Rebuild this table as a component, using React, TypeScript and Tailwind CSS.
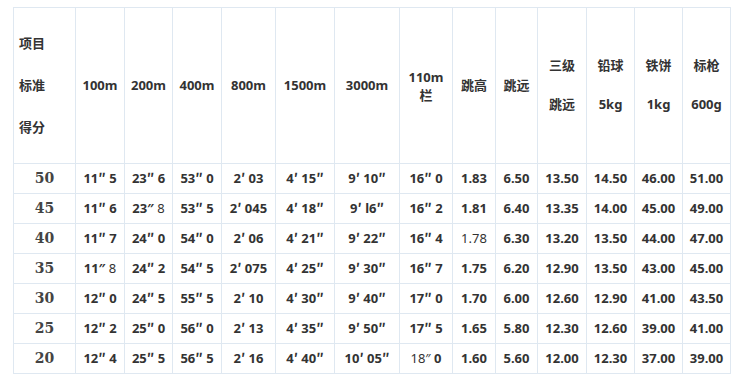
import React from "react";

const widths = [62, 49, 48, 49, 54, 59, 65, 53, 43, 42, 49, 48, 48, 48];

type Cell = string | React.ReactNode;

const rows: Cell[][] = [
  ["50", "11″ 5", "23″ 6", "53″ 0", "2′ 03", "4′ 15″", "9′ 10″", "16″ 0", "1.83", "6.50", "13.50", "14.50", "46.00", "51.00"],
  ["45", "11″ 6", <>23″ <span className="font-normal">8</span></>, "53″ 5", "2′ 045", "4′ 18″", "9′ l6″", "16″ 2", "1.81", "6.40", "13.35", "14.00", "45.00", "49.00"],
  ["40", "11″ 7", "24″ 0", "54″ 0", "2′ 06", "4′ 21″", "9′ 22″", "16″ 4", <span className="font-normal">1.78</span>, "6.30", "13.20", "13.50", "44.00", "47.00"],
  ["35", <>11″ <span className="font-normal">8</span></>, "24″ 2", "54″ 5", "2′ 075", "4′ 25″", "9′ 30″", "16″ 7", "1.75", "6.20", "12.90", "13.50", "43.00", "45.00"],
  ["30", "12″ 0", "24″ 5", "55″ 5", "2′ 10", "4′ 30″", "9′ 40″", "17″ 0", "1.70", "6.00", "12.60", "12.90", "41.00", "43.50"],
  ["25", "12″ 2", "25″ 0", "56″ 0", "2′ 13", "4′ 35″", "9′ 50″", "17″ 5", "1.65", "5.80", "12.30", "12.60", "39.00", "41.00"],
  ["20", "12″ 4", "25″ 5", "56″ 5", "2′ 16", "4′ 40″", "10′ 05″", <><span className="font-normal">18″</span> 0</>, "1.60", "5.60", "12.00", "12.30", "37.00", "39.00"],
];

const bd = "border border-[#dfe8f1]";

function TwoLine({ a, b }: { a: string; b: string }) {
  return (
    <div className="flex flex-col items-center">
      <div className="h-[39px] flex items-center">{a}</div>
      <div className="h-[39px] flex items-center">{b}</div>
    </div>
  );
}

function renderCell(c: Cell): React.ReactNode {
  if (typeof c !== "string") return c;
  const parts = c.split(/([″′])/);
  return parts.map((p, i) =>
    p === "″" || p === "′" ? (
      <span key={i} style={{ fontFamily: '"Noto Sans CJK SC", sans-serif' }}>
        {p}
      </span>
    ) : (
      <React.Fragment key={i}>{p}</React.Fragment>
    )
  );
}

export default function App() {
  return (
    <div
      className="w-[746px] h-[391px] bg-white pl-[13px] pt-[7px] text-[#333]"
      style={{ fontFamily: '"Noto Sans", "Noto Sans CJK SC", sans-serif' }}
    >
      <table className="table-fixed border-collapse w-[718px] text-[13px] font-bold">
        <colgroup>
          {widths.map((w, i) => (
            <col key={i} style={{ width: w }} />
          ))}
        </colgroup>
        <thead>
          <tr className="h-[156px]">
            <th className={`${bd} text-left pl-[5px] font-bold`}>
              <div className="h-[42px] flex items-center">项目</div>
              <div className="h-[42px] flex items-center">标准</div>
              <div className="h-[42px] flex items-center">得分</div>
            </th>
            {["100m", "200m", "400m", "800m", "1500m", "3000m"].map((t) => (
              <th key={t} className={`${bd} font-bold text-center`}>{t}</th>
            ))}
            <th className={`${bd} font-bold text-center leading-[18px]`}>
              110m
              <br />栏
            </th>
            <th className={`${bd} font-bold text-center`}>跳高</th>
            <th className={`${bd} font-bold text-center`}>跳远</th>
            <th className={`${bd} font-bold`}>
              <TwoLine a="三级" b="跳远" />
            </th>
            <th className={`${bd} font-bold`}>
              <TwoLine a="铅球" b="5kg" />
            </th>
            <th className={`${bd} font-bold`}>
              <TwoLine a="铁饼" b="1kg" />
            </th>
            <th className={`${bd} font-bold`}>
              <TwoLine a="标枪" b="600g" />
            </th>
          </tr>
        </thead>
        <tbody>
          {rows.map((r, i) => (
            <tr key={i} className="h-[30px]">
              {r.map((c, j) => (
                <td
                  key={j}
                  className={`${bd} text-center whitespace-nowrap p-0 ${
                    j === 0 ? "text-[14px] text-[#444]" : ""
                  }`}
                  style={j === 0 ? { fontFamily: '"DejaVu Serif", serif' } : undefined}
                >
                  {renderCell(c)}
                </td>
              ))}
            </tr>
          ))}
        </tbody>
      </table>
    </div>
  );
}
